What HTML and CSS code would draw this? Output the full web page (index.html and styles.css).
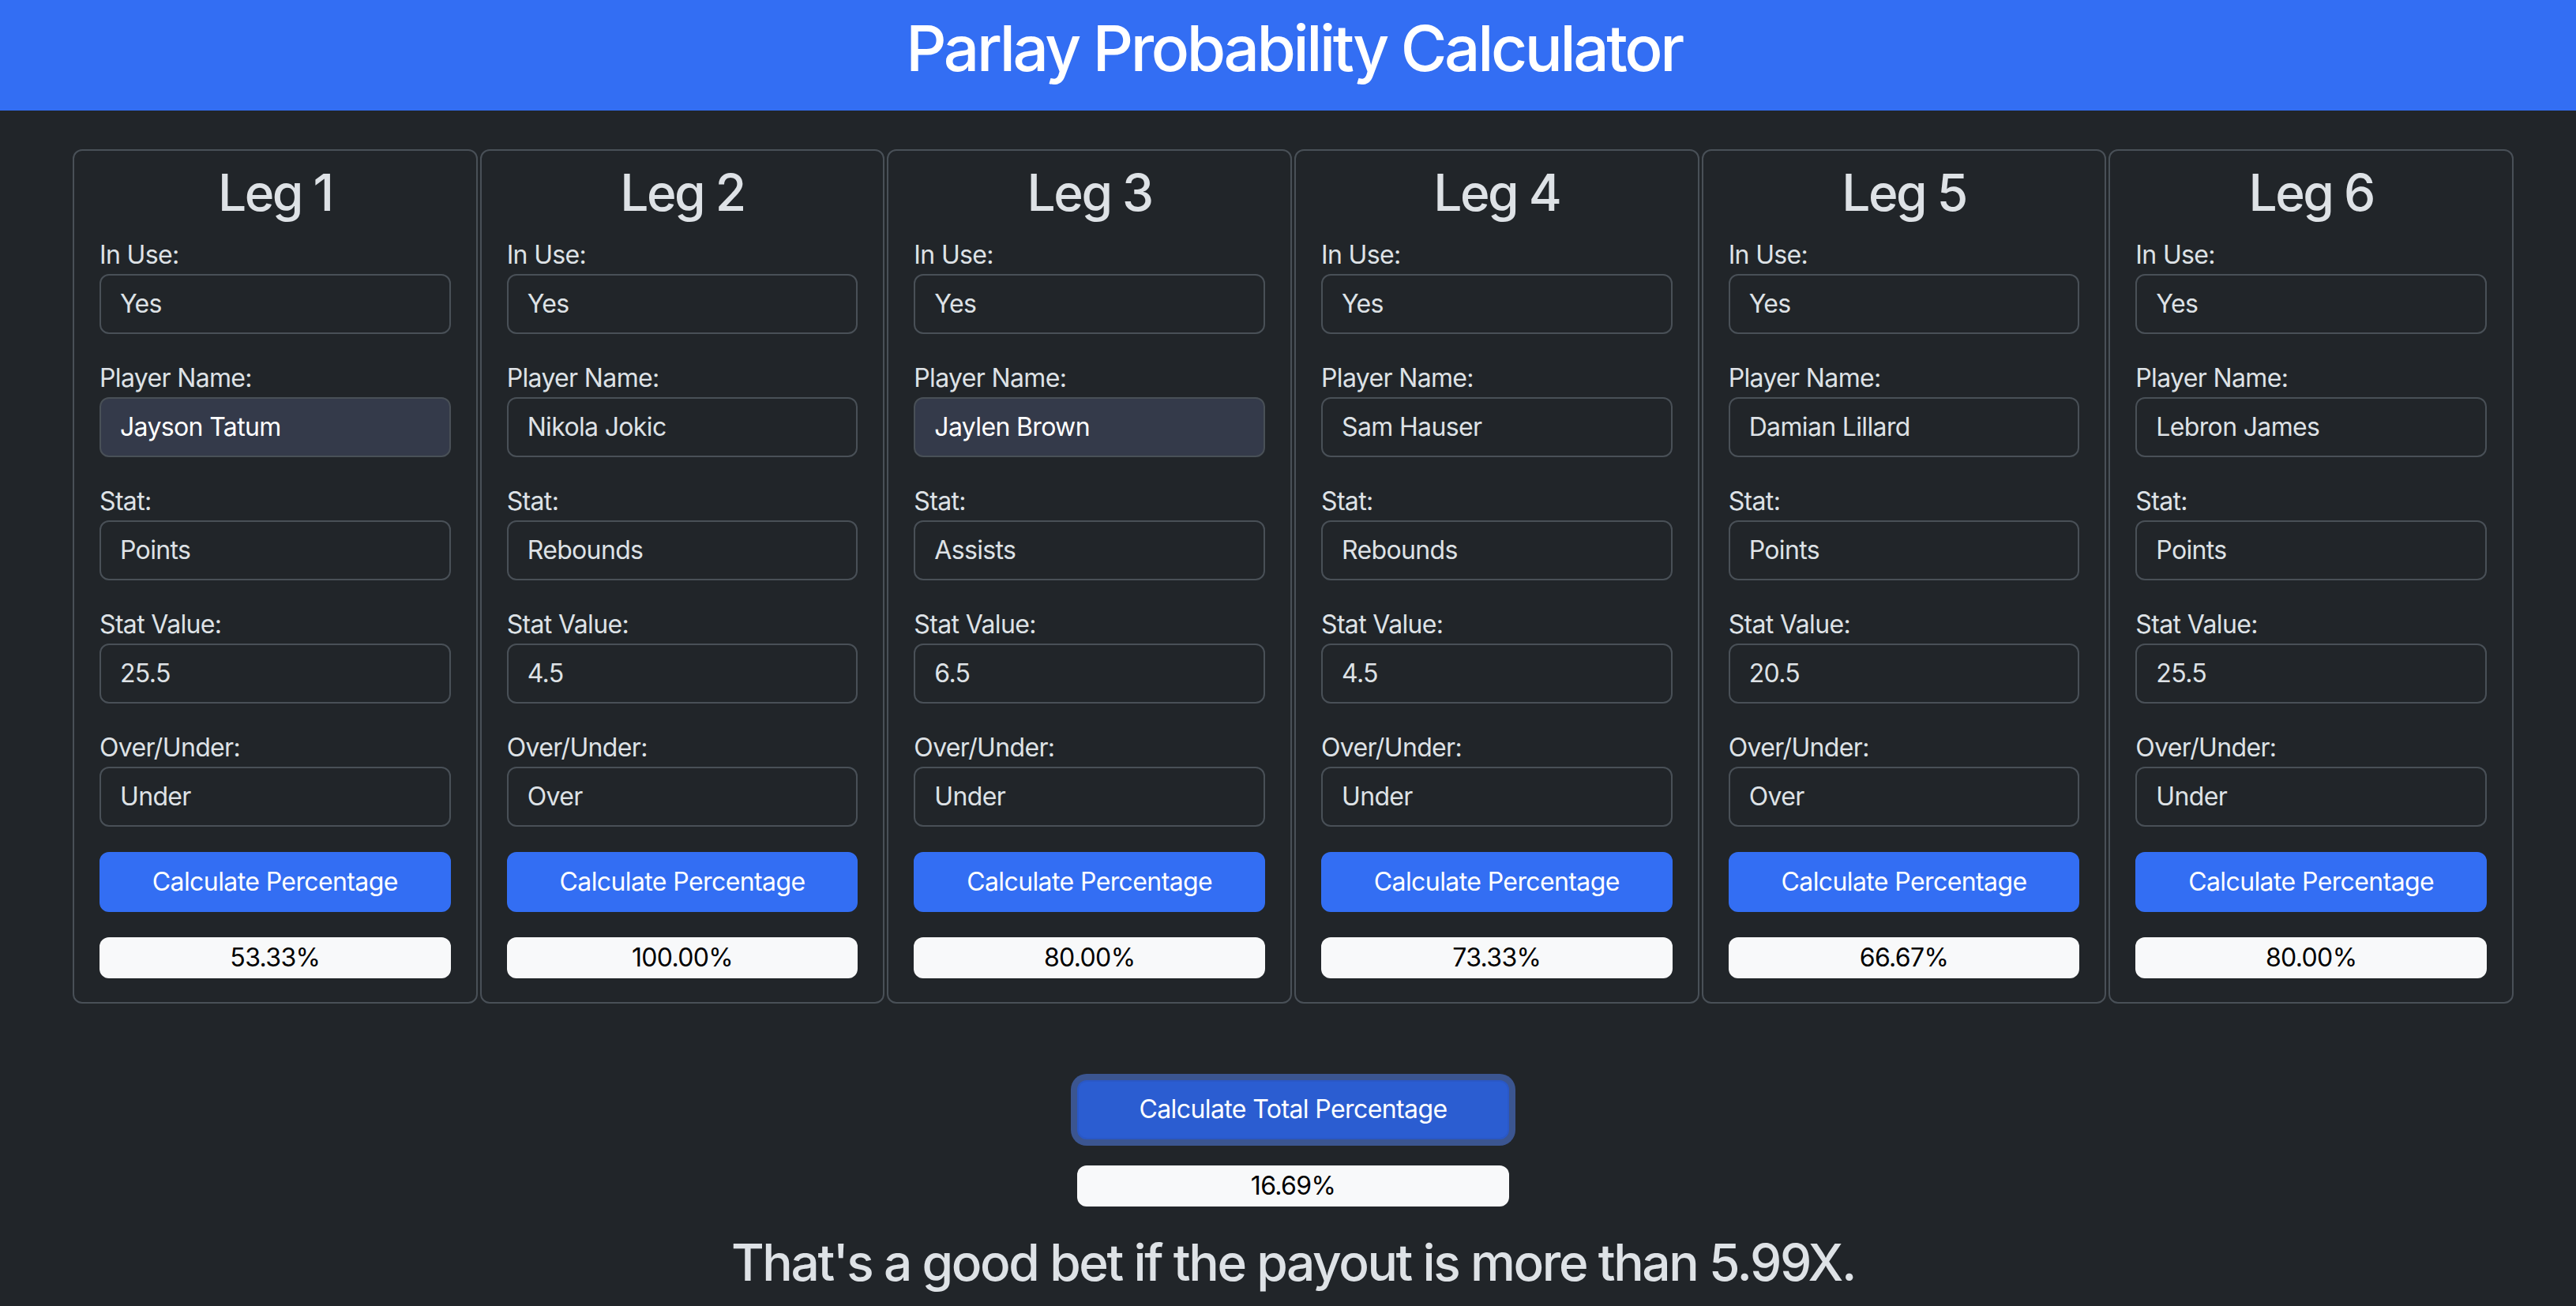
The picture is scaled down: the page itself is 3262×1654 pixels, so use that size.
FILE: index.html
```html
<!DOCTYPE html>
<html lang="en">
<head>
<meta charset="utf-8">
<title>Parlay Probability Calculator</title>
<link rel="stylesheet" href="styles.css">
</head>
<body>
<header class="topbar">
  <h1 class="title">Parlay Probability Calculator</h1>
</header>
<main class="main">
  <div class="legs">
    <section class="leg">
      <h2 class="leg-title">Leg 1</h2>
      <div class="field"><label class="field-label">In Use:</label><div class="input">Yes</div></div>
      <div class="field"><label class="field-label">Player Name:</label><div class="input input-filled">Jayson Tatum</div></div>
      <div class="field"><label class="field-label">Stat:</label><div class="input">Points</div></div>
      <div class="field"><label class="field-label">Stat Value:</label><div class="input">25.5</div></div>
      <div class="field"><label class="field-label">Over/Under:</label><div class="input">Under</div></div>
      <button class="btn">Calculate Percentage</button>
      <div class="result">53.33%</div>
    </section>
    <section class="leg">
      <h2 class="leg-title">Leg 2</h2>
      <div class="field"><label class="field-label">In Use:</label><div class="input">Yes</div></div>
      <div class="field"><label class="field-label">Player Name:</label><div class="input">Nikola Jokic</div></div>
      <div class="field"><label class="field-label">Stat:</label><div class="input">Rebounds</div></div>
      <div class="field"><label class="field-label">Stat Value:</label><div class="input">4.5</div></div>
      <div class="field"><label class="field-label">Over/Under:</label><div class="input">Over</div></div>
      <button class="btn">Calculate Percentage</button>
      <div class="result">100.00%</div>
    </section>
    <section class="leg">
      <h2 class="leg-title">Leg 3</h2>
      <div class="field"><label class="field-label">In Use:</label><div class="input">Yes</div></div>
      <div class="field"><label class="field-label">Player Name:</label><div class="input input-filled">Jaylen Brown</div></div>
      <div class="field"><label class="field-label">Stat:</label><div class="input">Assists</div></div>
      <div class="field"><label class="field-label">Stat Value:</label><div class="input">6.5</div></div>
      <div class="field"><label class="field-label">Over/Under:</label><div class="input">Under</div></div>
      <button class="btn">Calculate Percentage</button>
      <div class="result">80.00%</div>
    </section>
    <section class="leg">
      <h2 class="leg-title">Leg 4</h2>
      <div class="field"><label class="field-label">In Use:</label><div class="input">Yes</div></div>
      <div class="field"><label class="field-label">Player Name:</label><div class="input">Sam Hauser</div></div>
      <div class="field"><label class="field-label">Stat:</label><div class="input">Rebounds</div></div>
      <div class="field"><label class="field-label">Stat Value:</label><div class="input">4.5</div></div>
      <div class="field"><label class="field-label">Over/Under:</label><div class="input">Under</div></div>
      <button class="btn">Calculate Percentage</button>
      <div class="result">73.33%</div>
    </section>
    <section class="leg">
      <h2 class="leg-title">Leg 5</h2>
      <div class="field"><label class="field-label">In Use:</label><div class="input">Yes</div></div>
      <div class="field"><label class="field-label">Player Name:</label><div class="input">Damian Lillard</div></div>
      <div class="field"><label class="field-label">Stat:</label><div class="input">Points</div></div>
      <div class="field"><label class="field-label">Stat Value:</label><div class="input">20.5</div></div>
      <div class="field"><label class="field-label">Over/Under:</label><div class="input">Over</div></div>
      <button class="btn">Calculate Percentage</button>
      <div class="result">66.67%</div>
    </section>
    <section class="leg">
      <h2 class="leg-title">Leg 6</h2>
      <div class="field"><label class="field-label">In Use:</label><div class="input">Yes</div></div>
      <div class="field"><label class="field-label">Player Name:</label><div class="input">Lebron James</div></div>
      <div class="field"><label class="field-label">Stat:</label><div class="input">Points</div></div>
      <div class="field"><label class="field-label">Stat Value:</label><div class="input">25.5</div></div>
      <div class="field"><label class="field-label">Over/Under:</label><div class="input">Under</div></div>
      <button class="btn">Calculate Percentage</button>
      <div class="result">80.00%</div>
    </section>
  </div>
  <div class="total">
    <button class="btn btn-total">Calculate Total Percentage</button>
    <div class="result result-total">16.69%</div>
    <h2 class="verdict">That's a good bet if the payout is more than 5.99X.</h2>
  </div>
</main>
</body>
</html>
```

FILE: styles.css
```css
* { box-sizing: border-box; }

html, body {
  margin: 0;
  padding: 0;
  background: #212529;
  color: #dee2e6;
  font-family: Inter, "Noto Sans", "Liberation Sans", sans-serif;
  font-size: 32px;
  line-height: 1.5;
  letter-spacing: -0.65px;
  overflow: hidden;
}

.topbar {
  background: #336ef3;
  height: 140px;
  padding-top: 13px;
  text-align: center;
}

.title {
  margin: 0;
  font-size: 80px;
  line-height: 1.2;
  font-weight: 500;
  letter-spacing: -3.4px;
  color: #ffffff;
  padding-left: 15px;
}

.main {
  padding: 49px 79px 0 92px;
}

.legs {
  display: grid;
  grid-template-columns: repeat(6, 1fr);
  gap: 3px;
}

.leg {
  border: 2px solid #495057;
  border-radius: 12px;
  padding: 15px 32px 30px;
  display: flex;
  flex-direction: column;
}

.leg-title {
  margin: 0 0 16px;
  font-size: 64px;
  line-height: 1.2;
  font-weight: 500;
  letter-spacing: -2.5px;
  text-align: center;
  color: #dee2e6;
}

.field {
  display: flex;
  flex-direction: column;
  margin-bottom: 32px;
}

.field-label {
  font-size: 32px;
  line-height: 48px;
  color: #dee2e6;
}

.input {
  height: 76px;
  border: 2px solid #495057;
  border-radius: 12px;
  padding: 0 24px;
  display: flex;
  align-items: center;
  color: #dee2e6;
  background: #212529;
  font-size: 32px;
}

.input-filled {
  background: #343a4a;
  color: #ffffff;
}

.btn {
  height: 76px;
  border: 2px solid #336ef3;
  border-radius: 12px;
  background: #336ef3;
  color: #ffffff;
  font-family: inherit;
  font-size: 32px;
  line-height: 48px;
  letter-spacing: -0.6px;
  padding: 0 24px;
  margin: 0 0 32px;
  cursor: pointer;
}

.result {
  height: 52px;
  background: #f8f9fa;
  color: #000000;
  border-radius: 12px;
  text-align: center;
  font-size: 32px;
  line-height: 52px;
}

.total {
  display: flex;
  flex-direction: column;
  align-items: center;
  padding-top: 97px;
}

.btn-total {
  width: 547px;
  height: 75px;
  background: #2b5dd1;
  border-color: #2a58c6;
  box-shadow: 0 0 0 8px #3b5590;
  margin-bottom: 33px;
}

.result-total {
  width: 547px;
}

.verdict {
  margin: 33px 0 0;
  font-size: 64px;
  line-height: 1.2;
  font-weight: 500;
  letter-spacing: -2.4px;
  color: #dee2e6;
}
```
